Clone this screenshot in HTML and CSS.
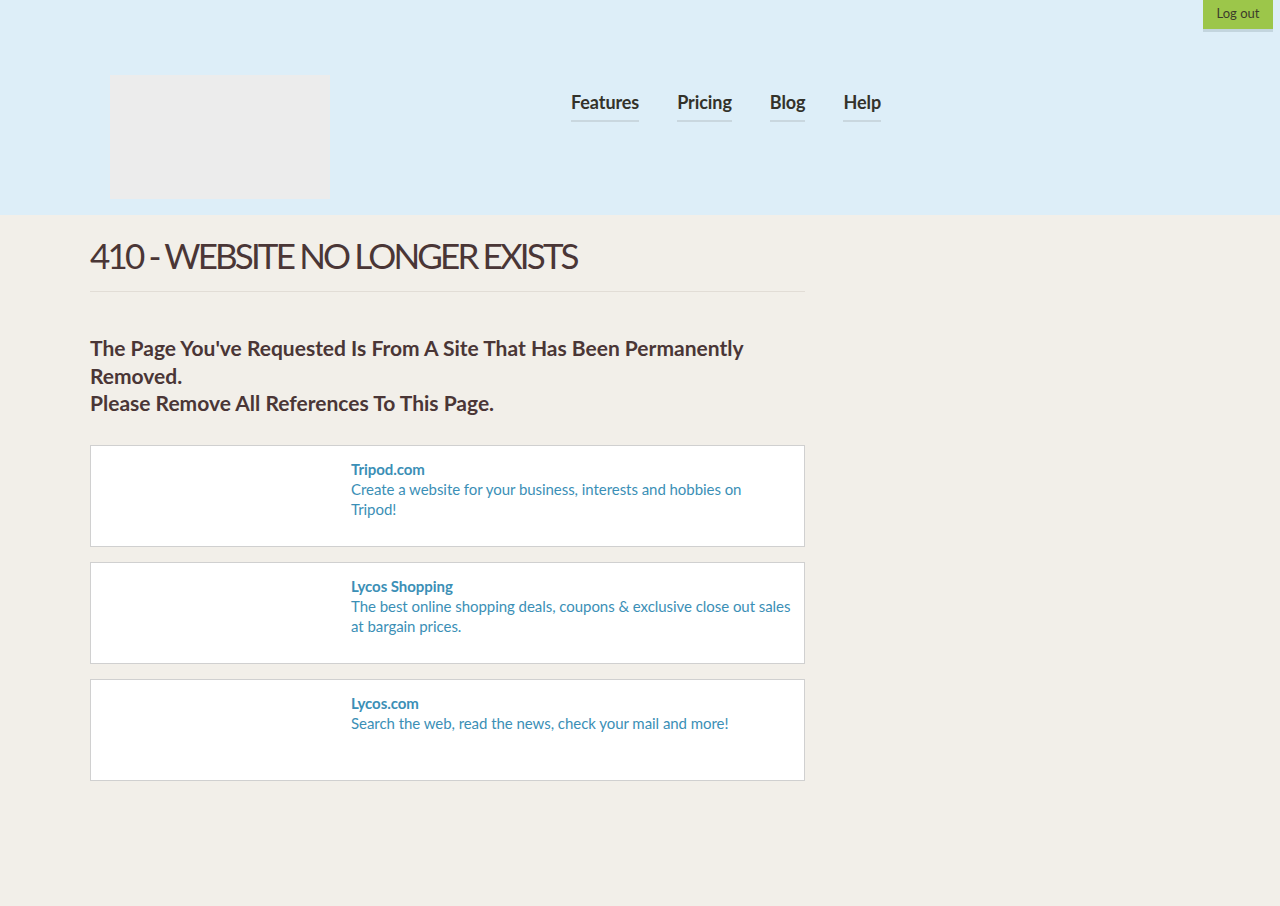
FILE: index.html
```html
<!DOCTYPE html>
<html>
<head>
<meta charset="utf-8">
<link rel="stylesheet" href="styles.css">
</head>
<body>
<header class="header">
  <a class="logout" href="#">Log out</a>
  <div class="header-inner">
    <div class="logo"></div>
    <nav class="nav">
      <a href="#">Features</a>
      <a href="#">Pricing</a>
      <a href="#">Blog</a>
      <a href="#">Help</a>
    </nav>
  </div>
</header>
<main class="main">
  <h1 class="title">410 - WEBSITE NO LONGER EXISTS</h1>
  <h2 class="subtitle">The Page You've Requested Is From A Site That Has Been Permanently Removed.<br>Please Remove All References To This Page.</h2>
  <div class="cards">
    <div class="card">
      <div class="card-img"></div>
      <div class="card-text">
        <a class="card-title" href="#">Tripod.com</a>
        <p>Create a website for your business, interests and hobbies on<br>Tripod!</p>
      </div>
    </div>
    <div class="card">
      <div class="card-img"></div>
      <div class="card-text">
        <a class="card-title" href="#">Lycos Shopping</a>
        <p>The best online shopping deals, coupons &amp; exclusive close out sales at bargain prices.</p>
      </div>
    </div>
    <div class="card">
      <div class="card-img"></div>
      <div class="card-text">
        <a class="card-title" href="#">Lycos.com</a>
        <p>Search the web, read the news, check your mail and more!</p>
      </div>
    </div>
  </div>
</main>
</body>
</html>
```
FILE: styles.css
```css
* { box-sizing: border-box; }
html, body { margin: 0; padding: 0; }
body {
  background: #f2efe9;
  font-family: Lato, "Open Sans", sans-serif;
  color: #4a3636;
  min-height: 906px;
}
.header {
  position: relative;
  height: 215px;
  background: #ddeef8;
}
.logout {
  position: absolute;
  top: 0;
  right: 7px;
  width: 70px;
  height: 32px;
  background: #9cc64a;
  border-bottom: 3px solid #c3d5de;
  color: #3c3c2a;
  font-size: 13px;
  text-align: center;
  line-height: 26px;
  text-decoration: none;
}
.header-inner {
  display: flex;
  padding: 75px 0 0 110px;
}
.logo {
  width: 220px;
  height: 124px;
  background: #ececec;
}
.nav {
  display: flex;
  gap: 38px;
  margin-left: 241px;
  margin-top: 15px;
  align-items: flex-start;
}
.nav a {
  font-size: 18px;
  font-weight: 700;
  letter-spacing: -0.08px;
  color: #33322a;
  text-decoration: none;
  line-height: 24px;
  padding-bottom: 6px;
  border-bottom: 2px solid #c9d7df;
}
.main {
  width: 715px;
  margin-left: 90px;
  padding-top: 20px;
}
.title {
  margin: 0;
  font-size: 35px;
  font-weight: 400;
  line-height: 40px;
  letter-spacing: -2.85px;
  padding-bottom: 16px;
  border-bottom: 1px solid #e2ddd6;
  color: #4a3636;
}
.subtitle {
  margin: 42px 0 0;
  font-size: 21px;
  font-weight: 700;
  line-height: 27.5px;
  color: #4a3636;
}
.cards {
  display: flex;
  flex-direction: column;
  gap: 15px;
  margin-top: 28px;
}
.card {
  display: flex;
  height: 102px;
  background: #fff;
  border: 1px solid #d0d0d0;
}
.card-img {
  width: 260px;
  flex: none;
}
.card-text {
  padding: 13px 8px 0 0;
  font-size: 15px;
  line-height: 20px;
  letter-spacing: -0.05px;
  color: #3b8fb6;
}
.card-title {
  display: block;
  font-weight: 700;
  color: #3b8fb6;
  text-decoration: none;
}
.card-text p { margin: 0; }
```
